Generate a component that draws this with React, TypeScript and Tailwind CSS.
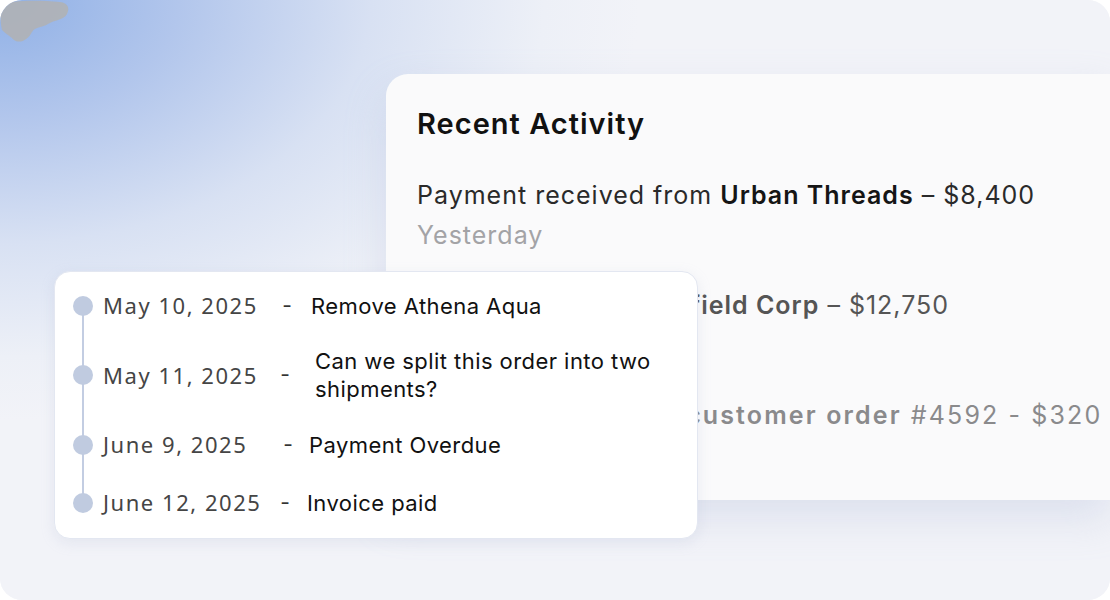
import React from "react";

const timeline = [
  { date: "May 10, 2025", text: "Remove Athena Aqua", dash: "ml-[0px]", desc: "ml-[12px]" },
  { date: "May 11, 2025", text: "Can we split this order into two shipments?", dash: "ml-[-2px]", desc: "ml-[18px]" },
  { date: "June 9, 2025", text: "Payment Overdue", dash: "ml-[1px]", desc: "ml-[9px]" },
  { date: "June 12, 2025", text: "Invoice paid", dash: "ml-[-2px]", desc: "ml-[10px]" },
];

export default function App() {
  return (
    <div className="w-[1110px] h-[600px] bg-white">
      <div className="relative w-[1110px] h-[600px] overflow-hidden rounded-[22px] bg-[#f3f4f8]">
        {/* background glow */}
        <div className="absolute inset-0 bg-[radial-gradient(ellipse_640px_420px_at_0%_0%,#8fb0e6_0%,#b2c6ec_28%,#d8e1f3_58%,#edf0f7_85%,#f2f3f8_100%)]" />
        {/* grainy blob top-left */}
        <svg className="absolute left-0 top-0" width="70" height="48" viewBox="0 0 70 48">
          <path
            d="M2 4 C12 0 40 0 60 2 C68 3 70 8 67 14 C64 20 54 20 48 24 C42 28 36 26 32 32 C28 40 20 44 14 40 C10 36 6 34 2 30 C0 22 0 10 2 4 Z"
            fill="#b1b1b1"
            opacity="0.85"
          />
        </svg>

        <div className="relative pl-[386px] pt-[74px]">
          <div className="h-[426px] rounded-tl-[22px] rounded-bl-[4px] bg-[#fafafb] pl-[31px] pt-[30px] shadow-[0_18px_40px_rgba(170,182,214,0.3)] font-['Inter',sans-serif]">
            <h2 className="text-[29px] leading-[40px] font-semibold text-[#111] tracking-[0.035em]">
              Recent Activity
            </h2>
            <div className="mt-[31px] flex flex-col gap-[30px] text-[25px] leading-[40px] whitespace-nowrap tracking-[0.04em]">
              <div>
                <div className="text-[#2a2a2a]">
                  Payment received from{" "}
                  <span className="font-semibold text-[#151515]">Urban Threads</span> – $8,400
                </div>
                <div className="text-[#a3a3a6]">Yesterday</div>
              </div>
              <div>
                <div className="text-[#555]">
                  Invoice sent to <span className="font-semibold">Greenfield Corp</span> – $12,750
                </div>
                <div className="text-[#b0b0b3]">2 days ago</div>
              </div>
              <div>
                <div className="text-[#8a8a8c] tracking-[0.085em]">
                  Refunds issued for <span className="font-semibold">customer order</span> #4592 - $320
                </div>
                <div className="text-[#c0c0c3]">3 days ago</div>
              </div>
            </div>
          </div>
        </div>

        {/* overlay timeline card */}
        <div className="absolute left-[54px] top-[271px] w-[644px] h-[268px] rounded-[16px] bg-white border border-[#e3e7f1] shadow-[0_4px_14px_rgba(160,172,205,0.18)] pl-[18px] pt-[17px]">
          <div className="relative flex flex-col gap-[25px]">
            <div className="absolute left-[9px] top-[16px] bottom-[16px] w-[2px] bg-[#c3cde2]" />
            {timeline.map((t, i) => (
              <div key={i} className="relative flex items-center min-h-[32px]">
                <div className="w-[20px] h-[20px] rounded-full bg-[#c0cbe0] shrink-0" />
                <div className="ml-[10px] w-[172px] shrink-0 text-[22px] tracking-[0.07em] text-[#454545] font-['Noto_Sans',sans-serif]">
                  {t.date}
                </div>
                <div className={`${t.dash} w-[24px] shrink-0 text-center text-[21px] text-[#333] font-['Inter',sans-serif]`}>-</div>
                <div className={`${t.desc} w-[360px] text-[22px] leading-[28px] tracking-[0.02em] text-[#111] font-['Inter',sans-serif]`}>
                  {t.text}
                </div>
              </div>
            ))}
          </div>
        </div>
      </div>
    </div>
  );
}
